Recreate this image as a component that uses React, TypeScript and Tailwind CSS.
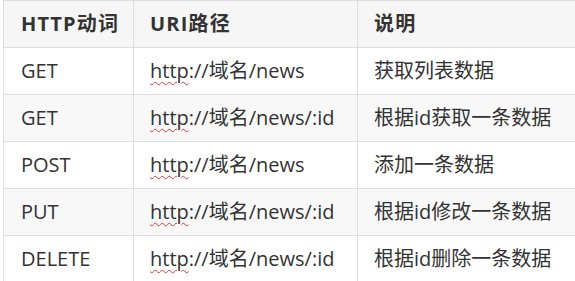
import React from "react";

const rows = [
  { method: "GET", path: "/news", desc: "获取列表数据" },
  { method: "GET", path: "/news/:id", desc: "根据id获取一条数据" },
  { method: "POST", path: "/news", desc: "添加一条数据" },
  { method: "PUT", path: "/news/:id", desc: "根据id修改一条数据" },
  { method: "DELETE", path: "/news/:id", desc: "根据id删除一条数据" },
];

export default function App() {
  return (
    <div
      className="w-[575px] h-[281px] overflow-hidden bg-white pl-[3px] text-[#333]"
      style={{ fontFamily: '"Open Sans", "Noto Sans CJK SC", sans-serif' }}
    >
      <table className="w-[620px] border-collapse table-fixed text-[20px] leading-[26px] whitespace-nowrap">
        <colgroup>
          <col className="w-[130px]" />
          <col className="w-[224px]" />
          <col />
        </colgroup>
        <thead>
          <tr className="h-[47px] bg-[#f6f6f6]">
            <th className="border border-[#dfdfdf] pl-[17px] text-left font-bold tracking-[1.2px]">HTTP动词</th>
            <th className="border border-[#dfdfdf] pl-[16px] text-left font-bold tracking-[1.2px]">URI路径</th>
            <th className="border border-[#dfdfdf] pl-[16px] text-left font-bold tracking-[1.2px]">说明</th>
          </tr>
        </thead>
        <tbody>
          {rows.map((r, i) => (
            <tr key={i} className={i % 2 === 1 ? "h-[47px] bg-[#f8f8f8]" : "h-[47px] bg-white"}>
              <td className="border border-[#dfdfdf] px-[17px]">{r.method}</td>
              <td className="border border-[#dfdfdf] px-[16px]">
                <span className="underline decoration-wavy decoration-[#e03a3a] decoration-1 underline-offset-[3px]">http</span>
                ://域名{r.path}
              </td>
              <td className="border border-[#dfdfdf] px-[16px]">{r.desc}</td>
            </tr>
          ))}
        </tbody>
      </table>
    </div>
  );
}
